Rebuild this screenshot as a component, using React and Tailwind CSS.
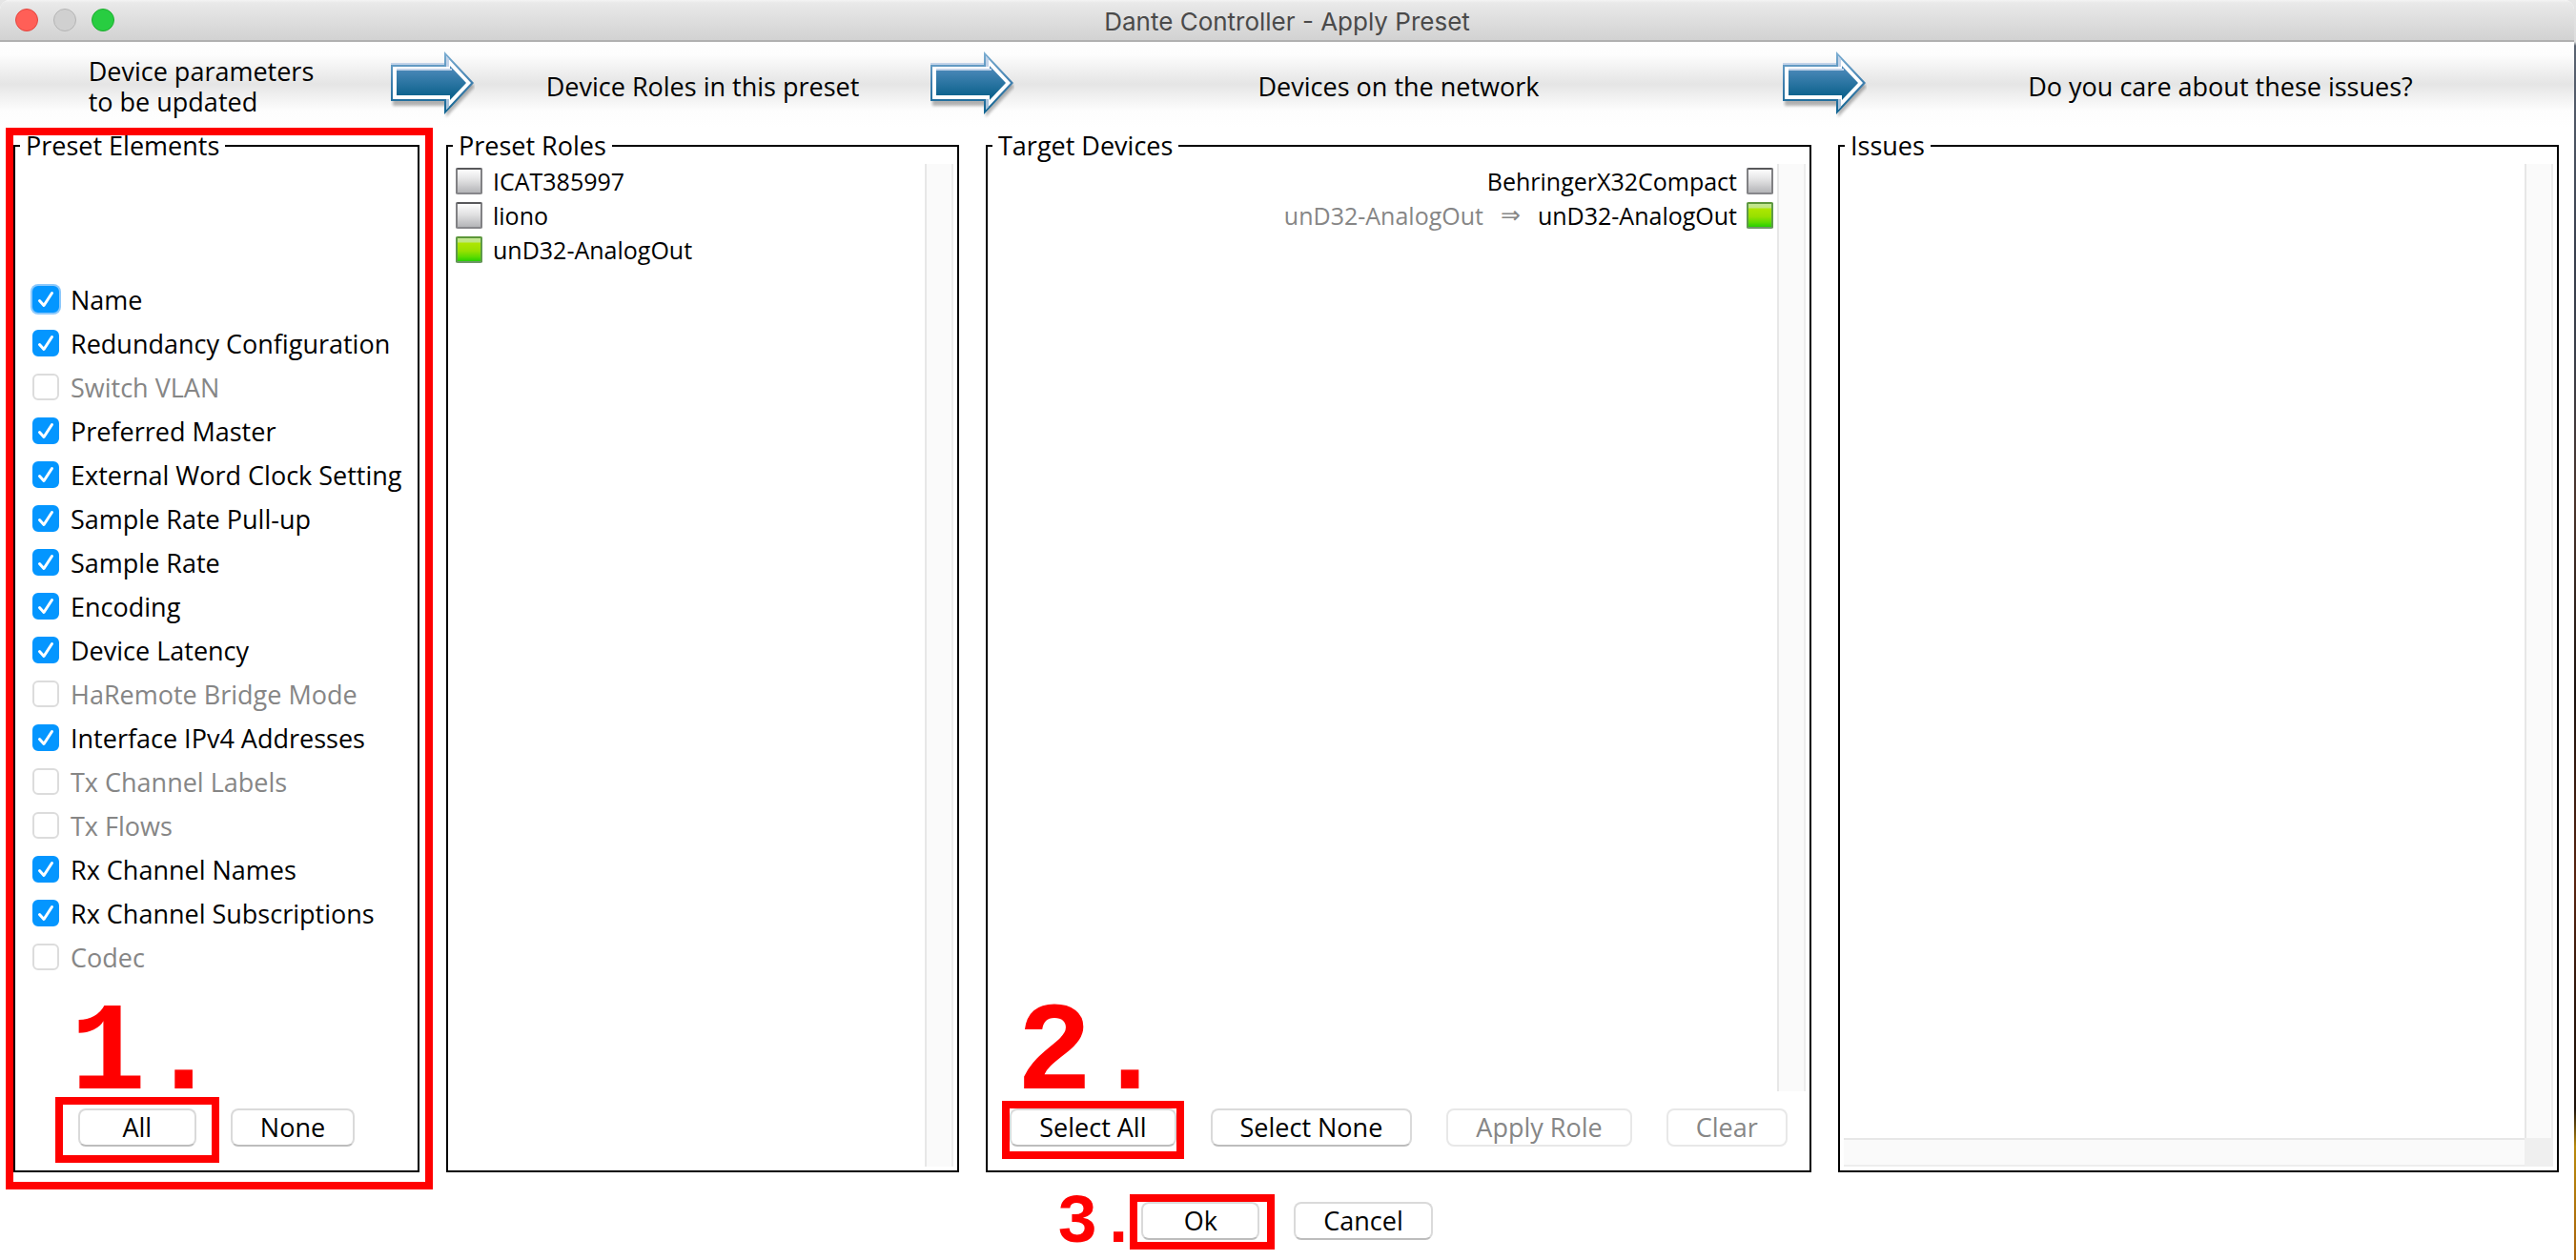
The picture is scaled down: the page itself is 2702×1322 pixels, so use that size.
import React from "react";

const ELEMENTS = [
  ["Name", true],
  ["Redundancy Configuration", true],
  ["Switch VLAN", false],
  ["Preferred Master", true],
  ["External Word Clock Setting", true],
  ["Sample Rate Pull-up", true],
  ["Sample Rate", true],
  ["Encoding", true],
  ["Device Latency", true],
  ["HaRemote Bridge Mode", false],
  ["Interface IPv4 Addresses", true],
  ["Tx Channel Labels", false],
  ["Tx Flows", false],
  ["Rx Channel Names", true],
  ["Rx Channel Subscriptions", true],
  ["Codec", false],
];

function HeaderArrow({ id }) {
  return (
    <svg viewBox="0 0 88 74" className="h-[74px] w-[88px] shrink-0" aria-hidden="true">
      <defs>
        <linearGradient id={`${id}-edge`} x1="0" y1="0" x2="0" y2="1">
          <stop offset="0" stopColor="#7fb0d4" />
          <stop offset="0.5" stopColor="#3f7fae" />
          <stop offset="1" stopColor="#0f6491" />
        </linearGradient>
        <linearGradient id={`${id}-fill`} x1="0" y1="0" x2="0" y2="1">
          <stop offset="0.1" stopColor="#4a88b8" />
          <stop offset="0.85" stopColor="#10648f" />
        </linearGradient>
        <filter id={`${id}-blur`} x="-20%" y="-20%" width="140%" height="140%">
          <feGaussianBlur stdDeviation="1.5" />
        </filter>
      </defs>
      <g transform="translate(0 2)">
        <polygon points="2,19 58,19 58,6 88,37 58,69 58,57 2,57" fill="#000" opacity="0.28" filter={`url(#${id}-blur)`} />
        <rect x="0" y="12" width="56" height="3" fill="#c3d3e9" />
        <polygon points="0,14 56,14 56,0 87,33 56,66 56,52 0,52" fill={`url(#${id}-edge)`} />
        <polygon points="2,16 58,16 58,5 84,33 58,61 58,50 2,50" fill="#fff" />
        <polygon points="58,5 61,8 61,16 58,16" fill="#c3d3e9" />
        <polygon points="58,61 61,58 61,50 58,50" fill="#a9c3da" />
        <polygon points="6,18 62,18 62,15 79,33 62,51 62,46 6,46" fill={`url(#${id}-fill)`} />
        <rect x="6" y="18" width="58" height="2" fill="#c3d3e9" />
      </g>
    </svg>
  );
}

function Panel({ title, children }) {
  return (
    <fieldset className="flex min-w-0 flex-col border-2 border-black">
      <legend className="ml-[5px] px-[6px] leading-[30px]">{title}</legend>
      {children}
    </fieldset>
  );
}

function CheckRow({ label, on, focused }) {
  return (
    <label className={on ? "flex h-[46px] items-center gap-3" : "flex h-[46px] items-center gap-3 text-[#868686]"}>
      <span className="grid shrink-0 place-items-center">
        <input
          type="checkbox"
          defaultChecked={on}
          disabled={!on}
          className={
            "col-start-1 row-start-1 size-7 appearance-none rounded-[6px] border-2 border-[#dcdcdc] bg-white checked:border-[#0496ff] checked:bg-[#0496ff]" +
            (focused ? " shadow-[0_0_0_2px_#8cc8fb]" : "")
          }
        />
        {on && (
          <svg viewBox="0 0 28 28" className="pointer-events-none col-start-1 row-start-1 size-7" fill="none" aria-hidden="true">
            <path d="M7.5 15.5 L12 20.5 L20.5 7.5" stroke="#fff" strokeWidth="3" strokeLinecap="round" strokeLinejoin="round" />
          </svg>
        )}
      </span>
      <span className="pt-[2px] whitespace-nowrap">{label}</span>
    </label>
  );
}

function Led({ green }) {
  return green ? (
    <span className="size-7 shrink-0 rounded-[2px] border-2 border-x-[#5f9a4a] border-t-[#5c9638] border-b-[#6f9668] bg-[linear-gradient(#c3e693_0px,#bfe67f_4px,#aee600_5px,#98e000_55%,#5fdc00_80%,#27cf00)]" />
  ) : (
    <span className="size-7 shrink-0 rounded-[2px] border-2 border-x-[#818184] border-t-[#58585b] border-b-[#87878b] bg-[linear-gradient(#fdfdfd,#e2e2e3_45%,#b4b5b8)]" />
  );
}

function VScroll() {
  return <div className="w-[30px] shrink-0 border-x-2 border-l-[#e7e7e7] border-r-[#ededed] bg-[#fafafa]" />;
}

function Button({ children, disabled }) {
  return (
    <button
      type="button"
      disabled={disabled}
      className="h-10 min-w-[124px] rounded-lg border-2 border-[#dadada] border-b-[#bdbdbd] bg-white px-[29px] leading-9 whitespace-nowrap disabled:border-[#e8e8e8] disabled:text-[#868686]"
    >
      {children}
    </button>
  );
}

const markClass = "pointer-events-none absolute font-['Liberation_Mono',monospace] leading-none font-bold whitespace-nowrap text-[#f00]";
const boxClass = "pointer-events-none absolute border-8 border-[#f00]";

export default function App() {
  return (
    <div className="min-h-screen bg-[linear-gradient(#e6e6e6_0px,#dcdcdc_44px,#5b6472_48px,#39404e_20%,#3a3f4a_28%,#4a342c_40%,#1a120e_55%,#5a2410_70%,#2a150b_80%,#1c120a_88%,#b98a0c_91%,#a8620c)] pr-[2px]">
      <div className="flex min-h-screen flex-col overflow-hidden rounded-t-[10px] bg-white font-['Open_Sans',sans-serif] text-[27px] text-black">
        <header className="grid h-11 grid-cols-[1fr_auto_1fr] items-center border-b-2 border-[#b1b1b1] bg-[linear-gradient(#f4f4f4_0px,#e9e9e9_3px,#d2d2d2)] px-4">
          <div className="flex gap-4">
            <button type="button" aria-label="Close" className="size-6 rounded-full border border-[#e2463f] bg-[#ff5f57]" />
            <button type="button" aria-label="Minimize" className="size-6 rounded-full border border-[#b4b4b4] bg-[#d0d0d0]" />
            <button type="button" aria-label="Zoom" className="size-6 rounded-full border border-[#1dad2f] bg-[#28cd41]" />
          </div>
          <h1 className="pt-[3px] font-[Inter,sans-serif] text-[26px] leading-8 text-[#4a4a4a]">Dante Controller - Apply Preset</h1>
          <div />
        </header>

        <div className="grid h-[90px] grid-cols-[410fr_88px_478fr_88px_806fr_88px_742fr] items-center bg-[linear-gradient(#fff_0%,#fdfdfd_15%,#e5e5e5_49%,#fdfdfd_80%,#fff)] text-center leading-8">
          <p className="justify-self-center pt-1 pl-3 text-left">
            Device parameters
            <br />
            to be updated
          </p>
          <HeaderArrow id="a1" />
          <p className="pt-1">Device Roles in this preset</p>
          <HeaderArrow id="a2" />
          <p className="pt-1">Devices on the network</p>
          <HeaderArrow id="a3" />
          <p className="pt-1">Do you care about these issues?</p>
        </div>

        <main className="grid flex-1 grid-cols-[minmax(0,426fr)_minmax(0,538fr)_minmax(0,866fr)_minmax(0,756fr)] gap-7 pt-1 pr-4 pl-[14px]">
          <div className="relative grid">
            <Panel title="Preset Elements">
              <div className="flex flex-1 flex-col pt-[123px] pl-[18px]">
                {ELEMENTS.map(([label, on], i) => (
                  <CheckRow key={label} label={label} on={on} focused={i === 0} />
                ))}
              </div>
              <div className="flex justify-center gap-9 pb-6">
                <div className="relative">
                  <Button>All</Button>
                  <div className={`${boxClass} -top-3 -right-6 -bottom-4 -left-6`} />
                  <span className={`${markClass} -top-[122px] -left-2 text-[132px]`}>1.</span>
                </div>
                <Button>None</Button>
              </div>
            </Panel>
            <div className={`${boxClass} -top-1 -right-[14px] -bottom-[18px] -left-2`} />
          </div>

          <Panel title="Preset Roles">
            <div className="flex flex-1 pt-1 pr-1 pb-1">
              <ul className="flex-1 pl-2 text-[25px] leading-9">
                <li className="flex items-center gap-[11px]"><Led />ICAT385997</li>
                <li className="flex items-center gap-[11px]"><Led />liono</li>
                <li className="flex items-center gap-[11px]"><Led green />unD32-AnalogOut</li>
              </ul>
              <VScroll />
            </div>
          </Panel>

          <Panel title="Target Devices">
            <div className="flex flex-1 pt-1 pr-1">
              <ul className="flex-1 pr-1 text-[25px] leading-9">
                <li className="flex items-center justify-end gap-[10px]">BehringerX32Compact<Led /></li>
                <li className="flex items-center justify-end gap-[10px]">
                  <span className="text-[#868686]">unD32-AnalogOut</span>
                  <span className="px-2 font-['DejaVu_Sans',sans-serif] text-[25px] text-[#868686]">⇒</span>
                  <span>unD32-AnalogOut</span>
                  <Led green />
                </li>
              </ul>
              <VScroll />
            </div>
            <div className="flex justify-center gap-9 pt-[18px] pb-6">
              <div className="relative">
                <Button>Select All</Button>
                <div className={`${boxClass} -top-2 -right-2 -bottom-3 -left-2`} />
                <span className={`${markClass} -top-[122px] left-[7px] text-[132px]`}>2.</span>
              </div>
              <Button>Select None</Button>
              <Button disabled>Apply Role</Button>
              <Button disabled>Clear</Button>
            </div>
          </Panel>

          <Panel title="Issues">
            <div className="grid flex-1 grid-cols-[1fr_30px] grid-rows-[1fr_30px] pt-1 pr-1 pb-1 pl-1">
              <div />
              <VScroll />
              <div className="border-y-2 border-t-[#e7e7e7] border-b-[#ededed] bg-[#fafafa]" />
              <div className="bg-[#efefef]" />
            </div>
          </Panel>
        </main>

        <footer className="flex justify-center gap-9 pt-[31px] pb-[21px]">
          <div className="relative">
            <Button>Ok</Button>
            <div className={`${boxClass} -top-2 -right-4 -bottom-[10px] -left-3`} />
            <span className={`${markClass} -top-[13px] -left-[89px] text-[72px]`}>3.</span>
          </div>
          <Button>Cancel</Button>
        </footer>
      </div>
    </div>
  );
}
